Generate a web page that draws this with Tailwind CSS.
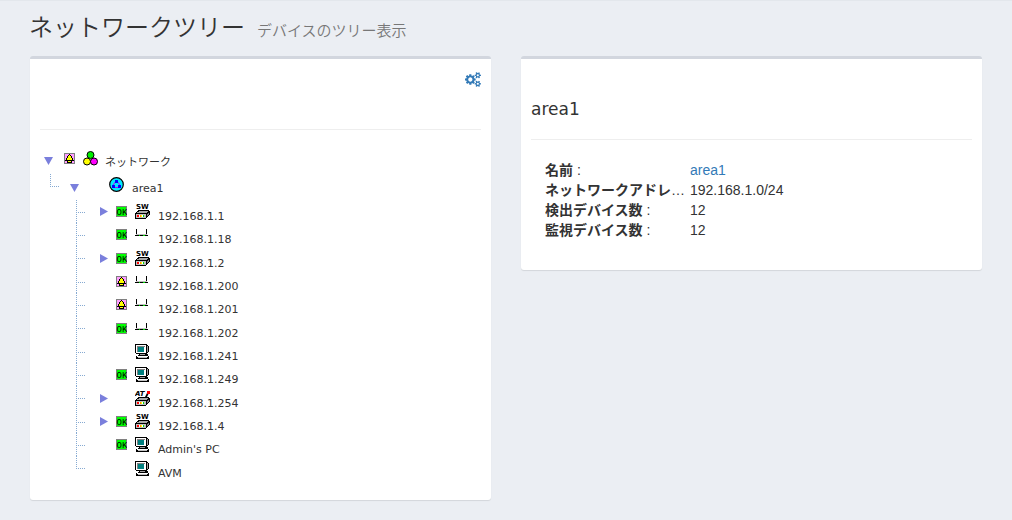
<!DOCTYPE html>
<html lang="ja">

<head>
  <meta charset="UTF-8">
  <meta name="viewport" content="width=device-width, initial-scale=1.0">
  <title>ネットワークツリー</title>
  <script src="https://cdn.jsdelivr.net/npm/@tailwindcss/browser@4"></script>
</head>

<body class="min-h-screen bg-[#ebeef3] border-t border-[#e3e7ec] text-[#333] font-['Liberation_Sans','Noto_Sans_CJK_JP',sans-serif]">
  <!-- Icons -->
  <svg class="hidden">
    <symbol id="down" viewBox="0 0 9 8"><path d="M0 0h9L4.500 8z" fill="#7a7fdc" /></symbol>
    <symbol id="right" viewBox="0 0 8 9"><path d="M0 0v9L8 4.500z" fill="#7a7fdc" /></symbol>
    <symbol id="branch"><path d="M.5 0v24M0 12.500h10" stroke="#86aad2" stroke-dasharray="1 1" shape-rendering="crispEdges" /></symbol>
    <symbol id="branch-end"><path d="M.5 0v13M0 12.500h10" stroke="#86aad2" stroke-dasharray="1 1" shape-rendering="crispEdges" /></symbol>
    <symbol id="alarm" viewBox="0 0 11 11" shape-rendering="crispEdges">
      <path d="M0 0h11v11H0z" fill="#808080" />
      <path d="M1 1h9v9H1z" fill="#ff9cff" />
      <path d="M5 1h1v1h1v1h1v2h1v2h1v1H8v2H3V8H1V7h1V5h1V3h1V2h1z" fill="#000" />
      <path d="M5 2h1v1h1v2h1v2H3V5h1V3h1zM4 8h3v1H4z" fill="#ff0" />
    </symbol>
    <symbol id="ok" viewBox="0 0 11 11">
      <path d="M0 0h11v11H0z" fill="#808080" />
      <path d="M1 1h9v9H1z" fill="#0f0" />
      <text x="0.500" y="9" font-family="Liberation Sans Narrow, Liberation Mono" font-size="9">OK</text>
    </symbol>
    <symbol id="network" viewBox="0 0 15 15">
      <g stroke="#000">
        <circle cx="7.500" cy="4" r="3.500" fill="#0e0" />
        <circle cx="4" cy="10.500" r="3.500" fill="#ff0" />
        <circle cx="11" cy="10.500" r="3.500" fill="#f0f" />
      </g>
    </symbol>
    <symbol id="area" viewBox="0 0 15 15">
      <circle cx="7.500" cy="7.500" r="6.800" fill="#00e8ff" stroke="#000" stroke-width="1.200" />
      <path d="M7 4 3.500 9M8 4l3.500 5M5 10.500h5" stroke="#d000e0" fill="none" />
      <path d="M6 3h3v3H6zM3 8h3v3H3zM9 8h3v3H9z" fill="#00f" />
    </symbol>
    <symbol id="box" viewBox="0 0 15 15">
      <g shape-rendering="crispEdges">
        <path d="M3 6h11v1h1v4h-1v1h-1v1h-1v1h-1v1H0V9h1V8h1V7h1z" fill="#000" />
        <path d="M4 7h9v1h-1v1H2V8h2z" fill="#a8a8a8" />
        <path d="M1 10h10v4H1z" fill="#c0c0c0" />
        <path d="M12 10h1V9h1v2h-1v1h-1z" fill="#808080" />
        <path d="M2 11h2v2H2z" fill="#f00" />
        <path d="M5 11h1v2H5z" fill="#f80" />
        <path d="M6 11h1v2H6z" fill="#ff0" />
        <path d="M8 11h1v2H8z" fill="#0d0" />
        <path d="M4 11h1v2H4zM7 11h1v2H7z" fill="#fff" />
      </g>
    </symbol>
    <symbol id="switch" viewBox="0 0 15 15">
      <text x="1" y="5" font-family="DejaVu Sans" font-weight="bold" font-size="7">SW</text>
      <use href="#box" width="15" height="15" />
    </symbol>
    <symbol id="at" viewBox="0 0 15 15">
      <text x="0" y="5" font-family="DejaVu Sans" font-weight="bold" font-style="italic" font-size="7">AT</text>
      <path d="M10 6l2-4h2l-2 4z" fill="#000" />
      <path d="M12 0h3v3h-3z" fill="#f00" />
      <use href="#box" width="15" height="15" />
    </symbol>
    <symbol id="router" viewBox="0 0 15 15" shape-rendering="crispEdges">
      <path d="M1 2h1v5H1zM11 2h1v5h-1zM0 8h13v1H0z" fill="#000" />
      <path d="M1 7h11v1H1z" fill="#c0c0c0" />
      <path d="M4 8h1v1H4zM8 8h2v1H8z" fill="#0d0" />
    </symbol>
    <symbol id="pc" viewBox="0 0 15 15" shape-rendering="crispEdges">
      <path d="M0 0h12v1h1v1h1v6h-1v1h-1v1h1v2h1v3H1v-3h2v-1h1v-1H1V9H0z" fill="#000" />
      <path d="M1 1h10v8H1z" fill="#fff" />
      <path d="M2 2h8v1H3v5H2z" fill="#808080" />
      <path d="M3 3h6v5H3z" fill="#008080" />
      <path d="M12 2h1v6h-1zM5 10h5v1H5z" fill="#a0a0a0" />
      <path d="M2 12h11v1H2z" fill="#fff" />
      <path d="M3 13h9v1H3z" fill="#c0c0c0" />
    </symbol>
    <symbol id="cogs" viewBox="0 0 1920 1792">
      <path fill="currentColor" d="M896 896q0-106-75-181t-181-75-181 75-75 181 75 181 181 75 181-75 75-181zm768 512q0-52-38-90t-90-38-90 38-38 90q0 53 37.500 90.500t90.500 37.500 90.500-37.500 37.500-90.500zm0-1024q0-52-38-90t-90-38-90 38-38 90q0 53 37.500 90.500t90.500 37.500 90.500-37.500 37.500-90.500zm-384 421v185q0 10-7 19.500t-16 10.500l-155 24q-11 35-32 76 34 48 90 115 7 11 7 20 0 12-7 19-23 30-82.500 89.500t-78.500 59.500q-11 0-21-7l-115-90q-37 19-77 31-11 108-23 155-7 24-30 24h-186q-11 0-20-7.500t-10-17.500l-23-153q-34-10-75-31l-118 89q-7 7-20 7-11 0-21-8-144-133-144-160 0-9 7-19 10-14 41-53t47-61q-23-44-35-82l-152-24q-10-1-17-9.500t-7-19.500v-185q0-10 7-19.500t16-10.500l155-24q11-35 32-76-34-48-90-115-7-11-7-20 0-12 7-20 22-30 82-89t79-59q11 0 21 7l115 90q34-18 77-32 11-108 23-154 7-24 30-24h186q11 0 20 7.500t10 17.500l23 153q34 10 75 31l118-89q8-7 20-7 11 0 21 8 144 133 144 160 0 8-7 19-12 16-42 54t-45 60q23 48 34 82l152 23q10 2 17 10.500t7 19.500zm640 533v140q0 16-149 31-12 27-30 52 51 113 51 138 0 4-4 7-122 71-124 71-8 0-46-47t-52-68q-20 2-30 2t-30-2q-14 21-52 68t-46 47q-2 0-124-71-4-3-4-7 0-25 51-138-18-25-30-52-149-15-149-31v-140q0-16 149-31 13-29 30-52-51-113-51-138 0-4 4-7 4-2 35-20t59-34 30-16q8 0 46 46.500t52 67.500q20-2 30-2t30 2q51-71 92-112l6-2q4 0 124 70 4 3 4 7 0 25-51 138 17 23 30 52 149 15 149 31zm0-1024v140q0 16-149 31-12 27-30 52 51 113 51 138 0 4-4 7-122 71-124 71-8 0-46-47t-52-68q-20 2-30 2t-30-2q-14 21-52 68t-46 47q-2 0-124-71-4-3-4-7 0-25 51-138-18-25-30-52-149-15-149-31v-140q0-16 149-31 13-29 30-52-51-113-51-138 0-4 4-7 4-2 35-20t59-34 30-16q8 0 46 46.500t52 67.500q20-2 30-2t30 2q51-71 92-112l6-2q4 0 124 70 4 3 4 7 0 25-51 138 17 23 30 52 149 15 149 31z" />
    </symbol>
  </svg>

  <!-- Page header -->
  <header class="flex items-baseline gap-3 px-[29px] pt-[7px] pb-3 font-['Noto_Sans_CJK_JP',sans-serif]">
    <h1 class="text-2xl leading-9 font-[350]">ネットワークツリー</h1>
    <small class="text-[15px] leading-5 font-[350] text-[#777]">デバイスのツリー表示</small>
  </header>

  <main class="grid grid-cols-2 items-start gap-[30px] px-[30px] pb-5">
    <!-- Tree -->
    <section class="rounded-[3px] border-t-[3px] border-[#d2d6de] bg-white px-[10px] pb-5 shadow-[0_1px_1px_rgba(0,0,0,0.1)]">
      <div class="flex h-[71px] items-start justify-end border-b border-[#eee] pt-[13px]">
        <button type="button" aria-label="設定" class="text-[#337ab7]"><svg class="h-[15px] w-4"><use href="#cogs" /></svg></button>
      </div>

      <div class="pt-[18px] pl-1 text-[11px] font-['DejaVu_Sans','Noto_Sans_CJK_JP',sans-serif]">
        <div class="flex h-[26px] items-center">
          <button type="button" aria-label="閉じる" class="w-5"><svg class="h-2 w-[9px]"><use href="#down" /></svg></button>
          <svg class="mb-[6px] size-[11px]"><use href="#alarm" /></svg>
          <svg class="mb-[6px] ml-2 size-[15px]"><use href="#network" /></svg>
          <span class="pt-1 pl-[7px]">ネットワーク</span>
        </div>

        <div class="flex h-[26px] items-center pl-[6px]">
          <svg class="mb-3 h-[14px] w-[10px]"><use href="#branch-end" /></svg>
          <button type="button" aria-label="閉じる" class="w-[39px] pt-[2px] pl-[10px]"><svg class="h-2 w-[9px]"><use href="#down" /></svg></button>
          <svg class="mb-[6px] ml-[10px] size-[15px]"><use href="#area" /></svg>
          <span class="pt-[5px] pl-2">area1</span>
        </div>

        <ul class="pl-8 [&>li]:flex [&>li]:h-[23px] [&>li]:items-center [&>li:nth-child(3n)]:h-6">
          <li>
            <svg class="h-full w-[10px]"><use href="#branch" /></svg>
            <button type="button" aria-label="開く" class="w-[30px] pl-[14px]"><svg class="h-[9px] w-2"><use href="#right" /></svg></button>
            <svg class="size-[11px]"><use href="#ok" /></svg>
            <svg class="ml-2 size-[15px]"><use href="#switch" /></svg>
            <span class="self-end pl-2 leading-3">192.168.1.1</span>
          </li>
          <li>
            <svg class="h-full w-[10px]"><use href="#branch" /></svg>
            <svg class="ml-[30px] size-[11px]"><use href="#ok" /></svg>
            <svg class="ml-2 size-[15px]"><use href="#router" /></svg>
            <span class="self-end pl-2 leading-3">192.168.1.18</span>
          </li>
          <li>
            <svg class="h-full w-[10px]"><use href="#branch" /></svg>
            <button type="button" aria-label="開く" class="w-[30px] pl-[14px]"><svg class="h-[9px] w-2"><use href="#right" /></svg></button>
            <svg class="size-[11px]"><use href="#ok" /></svg>
            <svg class="ml-2 size-[15px]"><use href="#switch" /></svg>
            <span class="self-end pl-2 leading-3">192.168.1.2</span>
          </li>
          <li>
            <svg class="h-full w-[10px]"><use href="#branch" /></svg>
            <svg class="ml-[30px] size-[11px]"><use href="#alarm" /></svg>
            <svg class="ml-2 size-[15px]"><use href="#router" /></svg>
            <span class="self-end pl-2 leading-3">192.168.1.200</span>
          </li>
          <li>
            <svg class="h-full w-[10px]"><use href="#branch" /></svg>
            <svg class="ml-[30px] size-[11px]"><use href="#alarm" /></svg>
            <svg class="ml-2 size-[15px]"><use href="#router" /></svg>
            <span class="self-end pl-2 leading-3">192.168.1.201</span>
          </li>
          <li>
            <svg class="h-full w-[10px]"><use href="#branch" /></svg>
            <svg class="ml-[30px] size-[11px]"><use href="#ok" /></svg>
            <svg class="ml-2 size-[15px]"><use href="#router" /></svg>
            <span class="self-end pl-2 leading-3">192.168.1.202</span>
          </li>
          <li>
            <svg class="h-full w-[10px]"><use href="#branch" /></svg>
            <svg class="ml-[49px] size-[15px]"><use href="#pc" /></svg>
            <span class="self-end pl-2 leading-3">192.168.1.241</span>
          </li>
          <li>
            <svg class="h-full w-[10px]"><use href="#branch" /></svg>
            <svg class="ml-[30px] size-[11px]"><use href="#ok" /></svg>
            <svg class="ml-2 size-[15px]"><use href="#pc" /></svg>
            <span class="self-end pl-2 leading-3">192.168.1.249</span>
          </li>
          <li>
            <svg class="h-full w-[10px]"><use href="#branch" /></svg>
            <button type="button" aria-label="開く" class="w-[30px] pl-[14px]"><svg class="h-[9px] w-2"><use href="#right" /></svg></button>
            <svg class="ml-[19px] size-[15px]"><use href="#at" /></svg>
            <span class="self-end pl-2 leading-3">192.168.1.254</span>
          </li>
          <li>
            <svg class="h-full w-[10px]"><use href="#branch" /></svg>
            <button type="button" aria-label="開く" class="w-[30px] pl-[14px]"><svg class="h-[9px] w-2"><use href="#right" /></svg></button>
            <svg class="size-[11px]"><use href="#ok" /></svg>
            <svg class="ml-2 size-[15px]"><use href="#switch" /></svg>
            <span class="self-end pl-2 leading-3">192.168.1.4</span>
          </li>
          <li>
            <svg class="h-full w-[10px]"><use href="#branch" /></svg>
            <svg class="ml-[30px] size-[11px]"><use href="#ok" /></svg>
            <svg class="ml-2 size-[15px]"><use href="#pc" /></svg>
            <span class="self-end pl-2 leading-3">Admin's PC</span>
          </li>
          <li>
            <svg class="h-full w-[10px]"><use href="#branch-end" /></svg>
            <svg class="ml-[49px] size-[15px]"><use href="#pc" /></svg>
            <span class="self-end pl-2 leading-3">AVM</span>
          </li>
        </ul>
      </div>
    </section>

    <!-- Details -->
    <section class="rounded-[3px] border-t-[3px] border-[#d2d6de] bg-white px-[10px] pb-[30px] shadow-[0_1px_1px_rgba(0,0,0,0.1)]">
      <h2 class="border-b border-[#eee] pt-[39px] pb-[19px] text-[17px] leading-[22px] font-['DejaVu_Sans',sans-serif]">area1</h2>
      <dl class="grid grid-cols-[140px_1fr] gap-x-[5px] pt-5 pl-[14px] text-sm leading-5">
        <dt class="truncate"><b>名前</b> :</dt>
        <dd><a href="#" class="text-[#337ab7]">area1</a></dd>
        <dt class="truncate"><b>ネットワークアドレス</b> :</dt>
        <dd>192.168.1.0/24</dd>
        <dt class="truncate"><b>検出デバイス数</b> :</dt>
        <dd>12</dd>
        <dt class="truncate"><b>監視デバイス数</b> :</dt>
        <dd>12</dd>
      </dl>
    </section>
  </main>
</body>

</html>
